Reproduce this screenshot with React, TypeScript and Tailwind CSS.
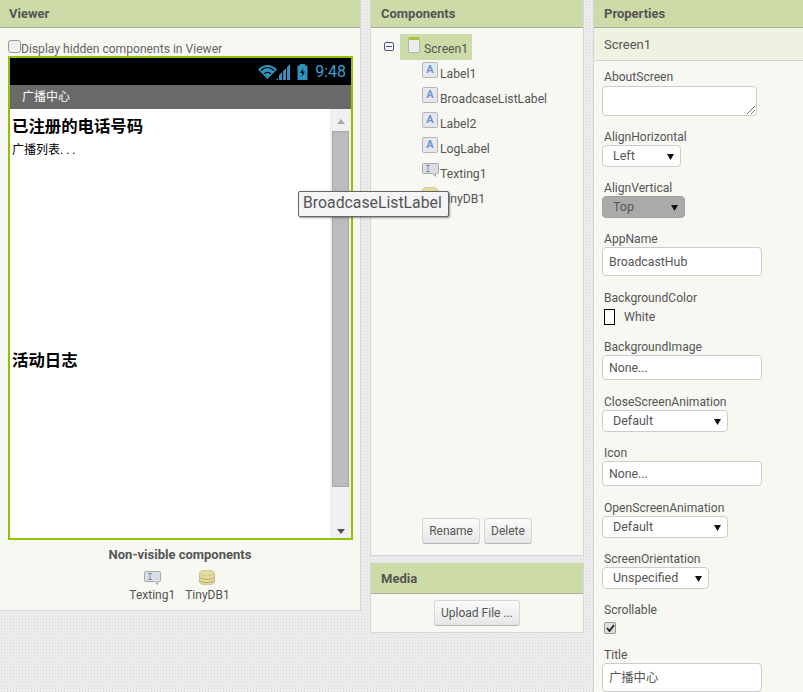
import type { ReactNode } from "react";

const font = { fontFamily: "Roboto, 'Noto Sans CJK SC', sans-serif" };

function PanelHeader({ title }: { title: string }) {
  return (
    <div className="flex h-[28px] items-center border-b border-[#a9b09a] bg-[#cddba8] pl-[10px] text-[13px] font-bold text-[#555555]">
      {title}
    </div>
  );
}

function LabelIcon() {
  return (
    <div className="flex h-[16px] w-[16px] justify-center rounded-[2px] border border-[#b5b5b5] bg-[#e6e8ee] text-[11px] leading-[13px] font-bold text-[#6f95d2]">
      A
    </div>
  );
}

function TextingIcon() {
  return (
    <svg width="17" height="16" viewBox="0 0 17 16">
      <path d="M1.5 1.5h14a1 1 0 0 1 1 1v8a1 1 0 0 1-1 1h-2v3l-3-3h-9a1 1 0 0 1-1-1v-8a1 1 0 0 1 1-1z" fill="#dcdde2" stroke="#a9a9a9" />
      <path d="M4 3.5h4M6 3.5v6M4 9.5h4" stroke="#7393c9" fill="none" />
    </svg>
  );
}

function DbIcon() {
  return (
    <svg width="16" height="15" viewBox="0 0 16 15">
      <ellipse cx="8" cy="3" rx="7.5" ry="2.8" fill="#e8dc96" stroke="#c9c6a0" />
      <path d="M.5 3v9c0 1.6 3.4 2.8 7.5 2.8s7.5-1.2 7.5-2.8V3c0 1.6-3.4 2.8-7.5 2.8S.5 4.6.5 3z" fill="#e8dc96" stroke="#c9c6a0" />
      <path d="M.5 6.5c0 1.6 3.4 2.8 7.5 2.8s7.5-1.2 7.5-2.8M.5 9.8c0 1.6 3.4 2.8 7.5 2.8s7.5-1.2 7.5-2.8" fill="none" stroke="#a8a480" />
    </svg>
  );
}

function TreeRow({ icon, name }: { icon: ReactNode; name: string }) {
  return (
    <div className="flex h-[25px] items-start">
      <div className="w-[18px] shrink-0">{icon}</div>
      <span className="pt-[4px] text-[12.2px] leading-[16px] text-[#555555]">{name}</span>
    </div>
  );
}

function PropLabel({ children }: { children: ReactNode }) {
  return <div className="h-[16px] pl-[10px] text-[12.1px] leading-[16px] text-[#555555]">{children}</div>;
}

function TextBox({ value, h = "h-[25px]" }: { value: string; h?: string }) {
  return (
    <div className={`ml-[8px] mb-[14px] flex w-[160px] items-center rounded-[4px] border border-[#cccccc] bg-white pt-[1px] pl-[6px] text-[12.3px] text-[#555555] ${h}`}>
      {value}
    </div>
  );
}

function Pick({ value, w, dark }: { value: string; w: string; dark?: boolean }) {
  return (
    <div
      className={`ml-[8px] mb-[13px] flex h-[22px] items-center justify-between rounded-[4px] border pr-[6px] pl-[10px] text-[12.5px] text-[#555555] ${w} ${
        dark ? "border-[#a0a0a0] bg-[#aaaaaa]" : "border-[#cccccc] bg-white"
      }`}
    >
      <span>{value}</span>
      <svg width="7" height="7" viewBox="0 0 7 7">
        <path d="M0 1h7L3.5 7z" fill="#111111" />
      </svg>
    </div>
  );
}

function Btn({ children }: { children: ReactNode }) {
  return (
    <div className="flex h-[26px] items-center rounded-[3px] border border-[#d5d5d5] border-b-[#b5b5b5] bg-gradient-to-b from-[#fbfbfb] to-[#e6e6e6] px-[6px] text-[12px] text-[#555555]">
      {children}
    </div>
  );
}

export default function App() {
  return (
    <div
      className="relative flex h-[692px] w-[803px] gap-[9px] overflow-hidden bg-[#ececec] bg-[radial-gradient(#d9d9d9_1px,transparent_1px)] bg-[length:3px_3px]"
      style={font}
    >
      {/* Viewer */}
      <div className="h-[611px] w-[361px] shrink-0 border-r border-b border-[#d6d6d6] bg-[#f7f8f2]">
        <div className="flex h-[28px] items-center border-b border-[#a9b09a] bg-[#cddba8] pl-[9px] text-[13px] font-bold text-[#555555]">
          Viewer
        </div>
        <div className="flex h-[28px] items-end pl-[8px]">
          <div className="mb-[3px] h-[13px] w-[13px] rounded-[3px] border border-[#999999] bg-[#efefef]" />
          <span className="text-[12.1px] leading-[13px] text-[#666666]">Display hidden components in Viewer</span>
        </div>
        <div className="ml-[8px] h-[484px] w-[345px] border-2 border-[#8fc200] bg-white">
          <div className="flex h-[27px] items-center justify-end gap-[5px] bg-black pr-[5px]">
            <svg width="32" height="16" viewBox="0 0 32 16">
              <path d="M0 5.500C5-.5 14-.5 19 5.500L9.500 15z" fill="#2f93bd" />
              <path d="M3 6.500C7 2.500 12 2.500 16 6.500" fill="none" stroke="#000" strokeWidth="1.200" />
              <path d="M6 9.800C8.300 7.800 10.700 7.800 13 9.800" fill="none" stroke="#000" strokeWidth="1.200" />
              <path d="M18 16l2-2v2zM21 16v-5l3-3v8zM25 16V7l3-3v12zM29 16V3l3-3v16z" fill="#2f93bd" />
            </svg>
            <svg width="11" height="16" viewBox="0 0 11 16" className="ml-[2px]">
              <path d="M3 0h5v1.500h2.500V16H.5V1.500H3z" fill="#2f93bd" />
              <path d="M6.500 4L3 9h2.500L4.500 13 8 7.500H5.500z" fill="#000" />
            </svg>
            <span className="ml-[2px] text-[16px] leading-none text-[#33a5d6]">9:48</span>
          </div>
          <div className="flex h-[24px] items-center bg-[#696969] pl-[12px] text-[12px] text-white">广播中心</div>
          <div className="flex h-[429px]">
            <div className="min-w-0 flex-1 pl-[2px] text-black">
              <div className="mt-[8px] text-[16.4px] leading-[20px] font-bold">已注册的电话号码</div>
              <div className="mt-[5px] text-[12px] leading-[16px]">广播列表. . .</div>
              <div className="mt-[193px] text-[16.4px] leading-[20px] font-bold">活动日志</div>
            </div>
            <div className="flex w-[21px] flex-col items-center bg-[#f0f0f0] pt-[10px]">
              <svg width="8" height="5" viewBox="0 0 8 5" className="shrink-0">
                <path d="M4 0l4 5H0z" fill="#a8a8a8" />
              </svg>
              <div className="mt-[7px] h-[356px] w-[17px] border border-[#a8a8a8] bg-[#bcbcbc]" />
              <svg width="8" height="5" viewBox="0 0 8 5" className="mt-[42px] shrink-0">
                <path d="M0 0h8L4 5z" fill="#505050" />
              </svg>
            </div>
          </div>
        </div>
        <div className="mt-[7px] text-center text-[13px] leading-[16px] font-bold text-[#555555]">Non-visible components</div>
        <div className="mt-[7px] flex justify-center gap-[10px] pr-[1px] text-[12px] leading-[16px] text-[#555555]">
          <div className="flex flex-col items-center">
            <TextingIcon />
            <span className="mt-[1px]">Texting1</span>
          </div>
          <div className="flex flex-col items-center">
            <DbIcon />
            <span className="mt-[2px]">TinyDB1</span>
          </div>
        </div>
      </div>

      {/* Components + Media */}
      <div className="w-[214px] shrink-0">
        <div className="flex h-[556px] flex-col border-r border-b border-l border-[#d6d6d6] bg-[#f7f8f2]">
          <PanelHeader title="Components" />
          <div className="flex-1 pt-[6px] pl-[13px]">
            <div className="flex items-start">
              <div className="mt-[8px] mr-[6px] flex h-[9px] w-[10px] items-center justify-center rounded-[2px] border border-[#4a4f9a]">
                <div className="h-[1px] w-[6px] bg-[#4a4f9a]" />
              </div>
              <div className="flex h-[26px] w-[72px] items-start bg-[#cddba8] pt-[3px] pl-[8px]">
                <div className="h-[16px] w-[12px] rounded-[2px] border border-[#b5b5b5] border-t-[3px] border-t-[#a9c43c] bg-[#ececec]" />
                <span className="mt-[4px] ml-[4px] text-[12.2px] leading-[16px] text-[#555555]">Screen1</span>
              </div>
            </div>
            <div className="mt-[2px] pl-[38px]">
              <TreeRow icon={<LabelIcon />} name="Label1" />
              <TreeRow icon={<LabelIcon />} name="BroadcaseListLabel" />
              <TreeRow icon={<LabelIcon />} name="Label2" />
              <TreeRow icon={<LabelIcon />} name="LogLabel" />
              <TreeRow icon={<TextingIcon />} name="Texting1" />
              <TreeRow icon={<DbIcon />} name="TinyDB1" />
            </div>
          </div>
          <div className="flex justify-center gap-[4px] pb-[11px]">
            <Btn>Rename</Btn>
            <Btn>Delete</Btn>
          </div>
        </div>
        <div className="mt-[7px] h-[70px] border-r border-b border-l border-[#d6d6d6] bg-[#f7f8f2]">
          <div className="flex h-[31px] items-center border-b border-[#a9b09a] bg-[#cddba8] pt-[1px] pl-[10px] text-[13px] font-bold text-[#555555]">Media</div>
          <div className="flex justify-center pt-[6px]">
            <Btn>Upload File ...</Btn>
          </div>
        </div>
      </div>

      {/* Properties */}
      <div className="min-w-0 flex-1 border-l border-[#d6d6d6] bg-[#f7f8f2]">
        <PanelHeader title="Properties" />
        <div className="mb-[8px] flex h-[33px] items-center border-b border-[#d6d6d6] bg-[#eef2e0] pt-[1px] pl-[10px] text-[13px] text-[#555555]">Screen1</div>
        <PropLabel>AboutScreen</PropLabel>
        <div className="relative ml-[8px] mt-[1px] mb-[13px] h-[30px] w-[155px] rounded-[4px] border border-[#cccccc] bg-white">
          <svg width="8" height="8" viewBox="0 0 8 8" className="absolute right-[1px] bottom-[1px]">
            <path d="M0 8l8-8M4 8l4-4" stroke="#777777" fill="none" />
          </svg>
        </div>
        <PropLabel>AlignHorizontal</PropLabel>
        <Pick value="Left" w="w-[79px]" />
        <PropLabel>AlignVertical</PropLabel>
        <Pick value="Top" w="w-[83px]" dark />
        <PropLabel>AppName</PropLabel>
        <TextBox value="BroadcastHub" h="h-[29px]" />
        <PropLabel>BackgroundColor</PropLabel>
        <div className="mb-[14px] flex h-[19px] items-end pl-[10px] text-[12.300px] text-[#555555]">
          <div className="h-[16px] w-[11px] border border-black bg-white" />
          <span className="ml-[9px] leading-[16px]">White</span>
        </div>
        <PropLabel>BackgroundImage</PropLabel>
        <TextBox value="None..." />
        <PropLabel>CloseScreenAnimation</PropLabel>
        <Pick value="Default" w="w-[126px]" />
        <PropLabel>Icon</PropLabel>
        <TextBox value="None..." />
        <PropLabel>OpenScreenAnimation</PropLabel>
        <Pick value="Default" w="w-[126px]" />
        <PropLabel>ScreenOrientation</PropLabel>
        <Pick value="Unspecified" w="w-[107px]" />
        <PropLabel>Scrollable</PropLabel>
        <div className="mb-[9px] flex h-[20px] items-center pl-[10px]">
          <div className="flex h-[12px] w-[12px] items-center justify-center rounded-[2px] border border-[#999999] bg-[#dedede]">
            <svg width="9" height="8" viewBox="0 0 9 8">
              <path d="M1 4l2.500 3L8 1" stroke="#222222" strokeWidth="1.800" fill="none" />
            </svg>
          </div>
        </div>
        <PropLabel>Title</PropLabel>
        <TextBox value="广播中心" h="h-[29px]" />
      </div>

      {/* tooltip */}
      <div className="absolute top-[191px] left-[298px] flex h-[26px] w-[151px] items-center rounded-[2px] border border-[#666666] bg-[#f4f4f6] pb-[2px] pl-[4px] text-[15.800px] text-[#555555] shadow-[1px_1px_2px_rgba(0,0,0,0.4)]">
        BroadcaseListLabel
      </div>
    </div>
  );
}
